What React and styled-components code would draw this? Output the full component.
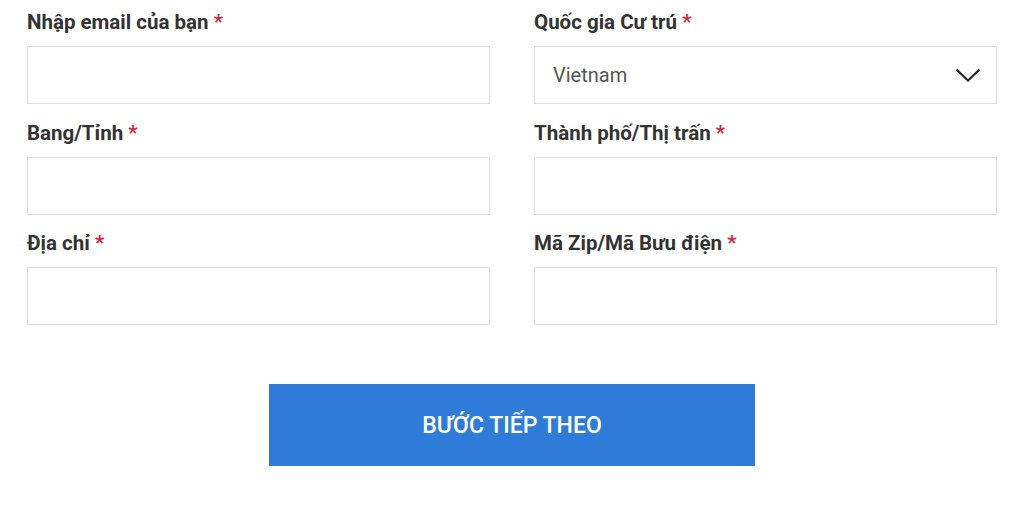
import React from 'react';
import styled, { createGlobalStyle } from 'styled-components';

const GlobalStyle = createGlobalStyle`
  body {
    margin: 0;
    background: #fff;
    font-family: Roboto, "Liberation Sans", Arial, sans-serif;
  }
`;

const Page = styled.div`
  width: 1024px;
  padding: 10px 27px 0;
  box-sizing: border-box;
`;

const Grid = styled.div`
  display: grid;
  grid-template-columns: 463px 463px;
  column-gap: 44px;
  row-gap: 16.5px;
`;

const Field = styled.div`
  display: flex;
  flex-direction: column;
`;

const Label = styled.label`
  font-size: 20.5px;
  line-height: 24px;
  font-weight: 700;
  color: #333;
  margin-bottom: 12px;
  white-space: nowrap;
`;

const Star = styled.span`
  color: #d7263d;
`;

const Input = styled.input`
  height: 58px;
  width: 100%;
  box-sizing: border-box;
  border: 1px solid #ddd;
  background: #fff;
  padding: 0 18px;
  font-family: inherit;
  font-size: 20px;
  color: #555;
  outline: none;
`;

const SelectBox = styled.div`
  height: 58px;
  box-sizing: border-box;
  border: 1px solid #ddd;
  display: flex;
  align-items: center;
  justify-content: space-between;
  padding: 0 15px 0 18px;
  font-size: 20px;
  color: #555;
`;

const Footer = styled.div`
  display: flex;
  justify-content: center;
  padding-top: 59px;
  margin-left: -27px;
  margin-right: -27px;
`;

const NextButton = styled.button`
  width: 486px;
  height: 82px;
  border: none;
  background: #2f7bd9;
  color: #fff;
  font-family: inherit;
  font-size: 23px;
  font-weight: 500;
  text-transform: uppercase;
  cursor: pointer;
`;

const fields = [
  { id: 'email', label: 'Nhập email của bạn' },
  { id: 'country', label: 'Quốc gia Cư trú', select: 'Vietnam' },
  { id: 'state', label: 'Bang/Tỉnh' },
  { id: 'city', label: 'Thành phố/Thị trấn' },
  { id: 'address', label: 'Địa chỉ' },
  { id: 'zip', label: 'Mã Zip/Mã Bưu điện' },
];

const Chevron = () => (
  <svg width="26" height="14" viewBox="0 0 26 14" fill="none">
    <path d="M1.5 1.5 L13 12.5 L24.5 1.5" stroke="#222" strokeWidth="2" />
  </svg>
);

const App = () => {
  return (
    <Page>
      <GlobalStyle />
      <Grid>
        {fields.map((f) => (
          <Field key={f.id}>
            <Label htmlFor={f.id}>
              {f.label} <Star>*</Star>
            </Label>
            {f.select ? (
              <SelectBox id={f.id}>
                <span>{f.select}</span>
                <Chevron />
              </SelectBox>
            ) : (
              <Input id={f.id} type="text" />
            )}
          </Field>
        ))}
      </Grid>
      <Footer>
        <NextButton>Bước tiếp theo</NextButton>
      </Footer>
    </Page>
  );
};

export default App;
